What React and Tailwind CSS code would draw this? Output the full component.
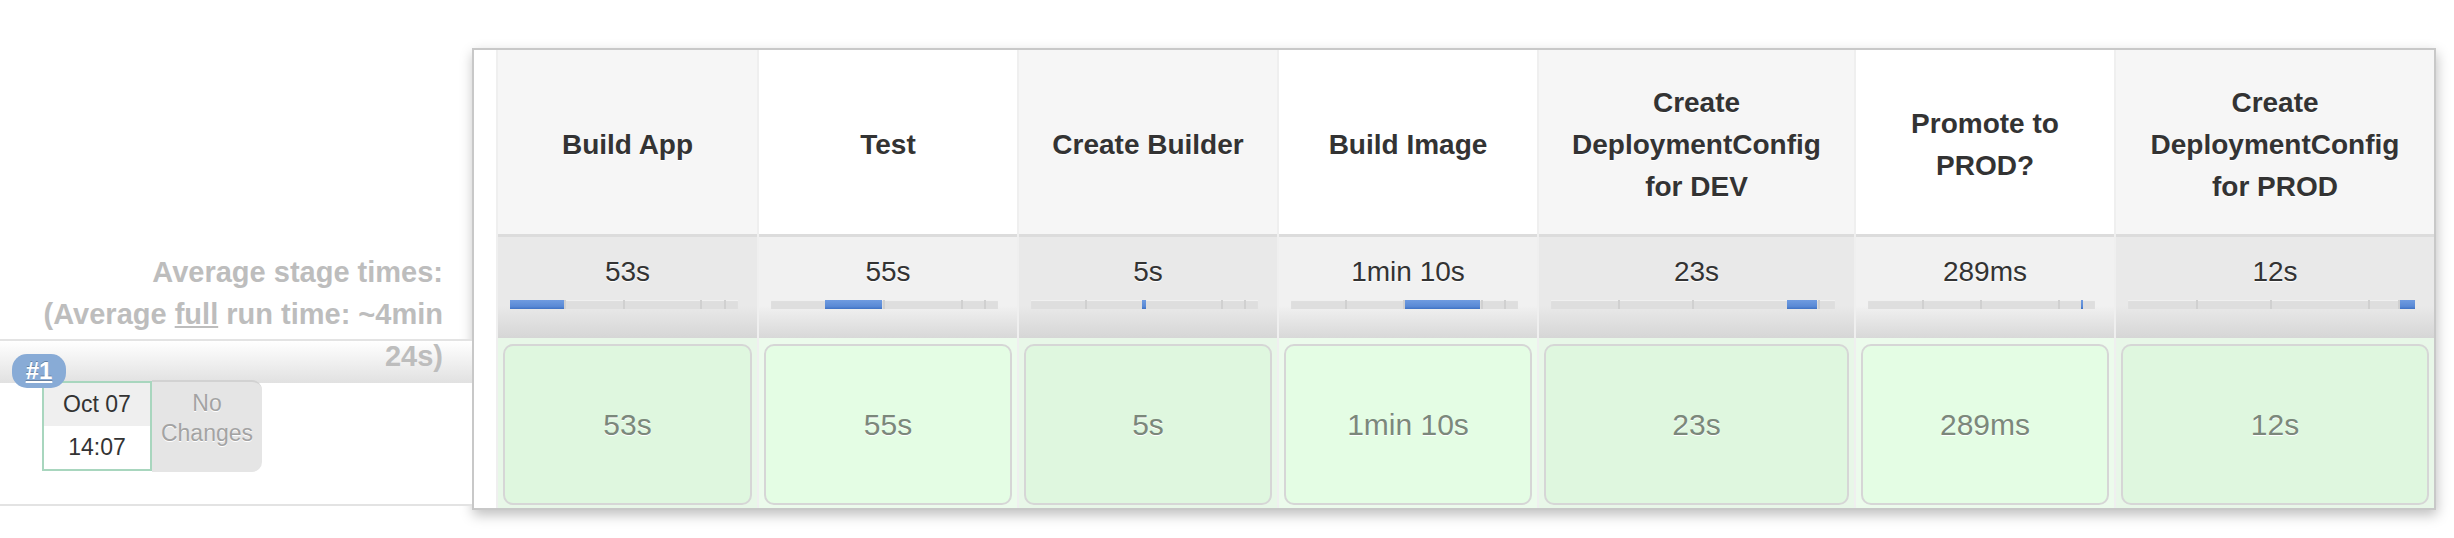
import React from 'react';

const stages = [
  { name: ['Build App'], avg: '53s', width: 'w-[259px]', from: 0, to: 0.237 },
  { name: ['Test'], avg: '55s', width: 'w-[258px]', from: 0.237, to: 0.491 },
  { name: ['Create Builder'], avg: '5s', width: 'w-[258px]', from: 0.49, to: 0.505 },
  { name: ['Build Image'], avg: '1min 10s', width: 'w-[258px]', from: 0.5, to: 0.832 },
  { name: ['Create', 'DeploymentConfig', 'for DEV'], avg: '23s', width: 'w-[315px]', from: 0.832, to: 0.937 },
  { name: ['Promote to', 'PROD?'], avg: '289ms', width: 'w-[258px]', from: 0.938, to: 0.943 },
  { name: ['Create', 'DeploymentConfig', 'for PROD'], avg: '12s', width: 'w-[318px]', from: 0.947, to: 1 },
];

const ticks = [0.237, 0.495, 0.835, 0.94];

const TimeBar = ({ from, to }) => (
  <div className="relative mt-[8px] ml-[12px] mr-[19px] h-[9px] bg-[#dedede] shadow-[inset_0_1px_1px_rgba(255,255,255,0.6)]">
    {ticks.map(t => (
      <div key={t} className="absolute top-0 h-full w-[2px] bg-[#d0d0d0]" style={{ left: `${t * 100}%` }} />
    ))}
    <div
      className="absolute top-0 h-full min-w-[2px] bg-[linear-gradient(to_bottom,#6f9be0,#5a8ad6_70%,#3f72c4)]"
      style={{ left: `${from * 100}%`, width: `${(to - from) * 100}%` }}
    />
  </div>
);

const StageColumn = ({ stage, odd }) => (
  <div className={`${stage.width} flex flex-col`}>
    <div className={`h-[184px] pt-[6px] flex items-center justify-center text-center font-bold text-[28px] leading-[42px] text-[#333] [text-shadow:0_1px_0_#fff] ${odd ? 'bg-[#f6f6f6]' : 'bg-white'}`}>
      <div>
        {stage.name.map(line => (
          <div key={line}>{line}</div>
        ))}
      </div>
    </div>
    <div className={`h-[104px] border-t-[3px] border-[#dcdcdc] flex flex-col ${odd ? 'bg-[linear-gradient(to_bottom,#e9e9e9_68%,#d6d6d6)]' : 'bg-[linear-gradient(to_bottom,#f1f1f1_68%,#d8d8d8)]'}`}>
      <div className="pt-[15px] text-center text-[28px] leading-[40px] text-[#333] [text-shadow:0_1px_1px_#fff]">{stage.avg}</div>
      <TimeBar from={stage.from} to={stage.to} />
    </div>
    <div className={`h-[170px] pt-[6px] pb-[3px] px-[5px] flex ${odd ? 'bg-[#e8f7e8]' : 'bg-[#ecfbec]'}`}>
      <div className={`flex-1 rounded-[10px] border-2 border-[#d6d6d6] flex items-center justify-center text-[30px] text-[#7b887b] [text-shadow:0_1px_0_#fff] ${odd ? 'bg-[#dff7df]' : 'bg-[#e4fde4]'}`}>
        {stage.avg}
      </div>
    </div>
  </div>
);

export default function App() {
  return (
    <div className="w-[2454px] h-[538px] bg-white flex font-['Liberation_Sans',Arial,sans-serif]">
      <div className="w-[472px] shrink-0 flex flex-col">
        <div className="h-[251px]" />
        <div className="relative z-10 h-[88px] pr-[29px] text-right font-bold text-[29px] leading-[42px] text-[#bdbdbd] whitespace-nowrap">
          <div>Average stage times:</div>
          <div>
            (Average <span className="underline">full</span> run time: ~4min
          </div>
          <div>24s)</div>
        </div>
        <div className="relative h-[167px] border-t-2 border-b-2 border-[#e3e3e3] bg-[linear-gradient(to_bottom,#ffffff_0px,#e1e1e1_42px,#ffffff_42px)]">
          <div className="flex ml-[42px] mt-[40px]">
            <div className="w-[110px] h-[90px] border-2 border-[#a8d6be] flex flex-col text-[23px] text-[#333] bg-white">
              <div className="h-[43px] bg-[#efefef] flex items-center justify-center">Oct 07</div>
              <div className="flex-1 flex items-center justify-center">14:07</div>
            </div>
            <div className="w-[110px] h-[92px] -mt-[1px] bg-[#e5e5e5] border-t-2 border-[#d2d2d2] rounded-r-[10px] pt-[6px] text-center text-[23px] leading-[30px] text-[#a3a3a3] [text-shadow:0_1px_0_#fff]">
              <div>No</div>
              <div>Changes</div>
            </div>
          </div>
          <div className="absolute left-[12px] top-[13px] w-[54px] h-[34px] rounded-[15px] bg-[#88abd6] flex items-center justify-center text-white font-bold text-[24px] underline [text-shadow:0_-1px_0_rgba(0,0,0,0.25)]">
            #1
          </div>
        </div>
      </div>
      <div className="mt-[48px] h-[462px] w-[1964px] shrink-0 border-2 border-[#c8c8c8] bg-white pl-[22px] flex shadow-[1px_5px_12px_rgba(0,0,0,0.25)]">
        <div className="flex gap-[2px] bg-[#efefef] pl-[2px]">
          {stages.map((stage, i) => (
            <StageColumn key={stage.name.join(' ')} stage={stage} odd={i % 2 === 0} />
          ))}
        </div>
      </div>
    </div>
  );
}
